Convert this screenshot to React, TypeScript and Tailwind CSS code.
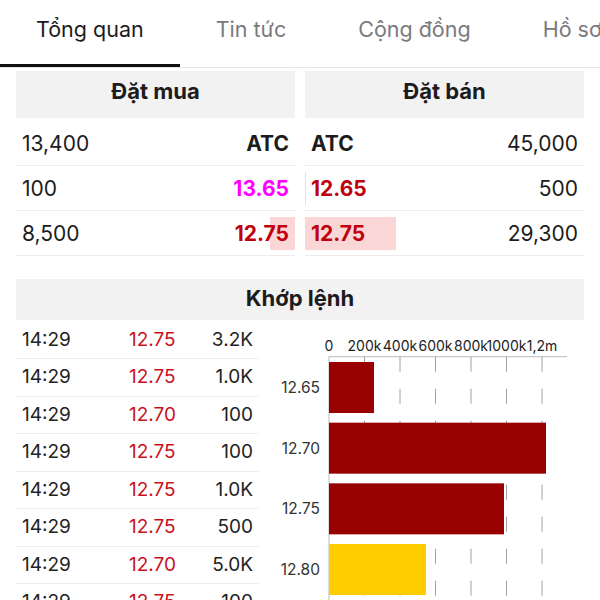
import React from "react";

const tabs = ["Tổng quan", "Tin tức", "Cộng đồng", "Hồ sơ"];

const trades = [
  ["14:29", "12.75", "3.2K"],
  ["14:29", "12.75", "1.0K"],
  ["14:29", "12.70", "100"],
  ["14:29", "12.75", "100"],
  ["14:29", "12.75", "1.0K"],
  ["14:29", "12.75", "500"],
  ["14:29", "12.70", "5.0K"],
  ["14:29", "12.75", "100"],
];

// volume chart: x0 = 70, 35.5px per 200k
const ticks = ["0", "200k", "400k", "600k", "800k", "1000k", "1,2m"];
const bars = [
  { label: "12.65", w: 45, color: "#990000" },
  { label: "12.70", w: 217, color: "#990000" },
  { label: "12.75", w: 175, color: "#990000" },
  { label: "12.80", w: 97, color: "#ffcc00" },
];

const VolumeChart = () => {
  const x0 = 70;
  const axisY = 36.7;
  return (
    <svg width="325" height="280" style={{ fontFamily: "Inter, 'Liberation Sans', sans-serif" }}>
      {ticks.map((t, i) => (
        <text key={t} x={x0 + i * 35.5} y={30.5} fontSize="14" fill="#222" textAnchor="middle">
          {t}
        </text>
      ))}
      <line x1={x0} y1={axisY} x2={308} y2={axisY} stroke="#bbb" strokeWidth="1" />
      <line x1={x0} y1={axisY} x2={x0} y2={280} stroke="#bbb" strokeWidth="1" />
      {ticks.slice(1).map((t, i) => (
        <line
          key={t}
          x1={x0 + (i + 1) * 35.5}
          y1={axisY}
          x2={x0 + (i + 1) * 35.5}
          y2={280}
          stroke="#a0a0a0"
          strokeWidth="1"
          strokeDasharray="15 17"
        />
      ))}
      {bars.map((b, i) => {
        const y = 42 + i * 60.67;
        return (
          <g key={b.label}>
            <rect x={x0} y={y} width={b.w} height={51} fill={b.color} />
            <text x={61} y={y + 31} fontSize="15.5" fill="#333" textAnchor="end">
              {b.label}
            </text>
          </g>
        );
      })}
    </svg>
  );
};

export default function App() {
  return (
    <div
      className="w-[600px] h-[600px] overflow-hidden bg-white text-[#1c1c1e]"
      style={{ fontFamily: "Inter, 'Liberation Sans', sans-serif" }}
    >
      {/* tabs */}
      <div className="flex whitespace-nowrap border-b border-[#e6e6e6]">
        {tabs.map((t, i) => (
          <div
            key={t}
            className={
              i === 0
                ? "px-[36px] h-[67px] pb-[6px] flex items-center text-[21.5px] border-b-[3px] border-[#111] text-[#1c1c1e]"
                : "px-[36px] h-[67px] pb-[6px] flex items-center text-[21.5px] border-b-[3px] border-transparent text-[#7a7a7e]"
            }
          >
            {t}
          </div>
        ))}
      </div>

      {/* order book */}
      <div className="px-4 mt-[3px] grid grid-cols-2 gap-x-[10px]">
        <div>
          <div className="h-[47px] pb-[6px] bg-[#f2f2f2] flex items-center justify-center text-[22px] font-bold">
            Đặt mua
          </div>
          <div className="mt-[3px] text-[21px]">
            <div className="h-[45px] pt-[1px] border-b border-[#ededed] flex items-center justify-between px-[6px]">
              <span>13,400</span>
              <span className="font-bold">ATC</span>
            </div>
            <div className="h-[45px] pt-[1px] border-b border-[#ededed] flex items-center justify-between px-[6px]">
              <span>100</span>
              <span className="font-bold text-[#f0f]">13.65</span>
            </div>
            <div className="relative h-[45px] pt-[1px] border-b border-[#ededed] flex items-center justify-between px-[6px]">
              <div className="absolute right-0 top-[6px] bottom-[5px] w-[25px] bg-[#fbd6d6]" />
              <span className="relative">8,500</span>
              <span className="relative font-bold text-[#c0000c]">12.75</span>
            </div>
          </div>
        </div>
        <div>
          <div className="h-[47px] pb-[6px] bg-[#f2f2f2] flex items-center justify-center text-[22px] font-bold">
            Đặt bán
          </div>
          <div className="mt-[3px] text-[21px]">
            <div className="h-[45px] pt-[1px] border-b border-[#ededed] flex items-center justify-between px-[6px]">
              <span className="font-bold">ATC</span>
              <span>45,000</span>
            </div>
            <div className="relative h-[45px] pt-[1px] border-b border-[#ededed] flex items-center justify-between px-[6px]">
              <div className="absolute left-0 top-[6px] bottom-[5px] w-[1px] bg-[#fbd6d6]" />
              <span className="relative font-bold text-[#c0000c]">12.65</span>
              <span className="relative">500</span>
            </div>
            <div className="relative h-[45px] pt-[1px] border-b border-[#ededed] flex items-center justify-between px-[6px]">
              <div className="absolute left-0 top-[6px] bottom-[5px] w-[91px] bg-[#fbd6d6]" />
              <span className="relative font-bold text-[#c0000c]">12.75</span>
              <span className="relative">29,300</span>
            </div>
          </div>
        </div>
      </div>

      {/* matched orders */}
      <div className="px-4 mt-[23px]">
        <div className="h-[41px] pb-[2px] bg-[#f2f2f2] flex items-center justify-center text-[22px] font-bold">
          Khớp lệnh
        </div>
        <div className="flex">
          <div className="w-[243px] mt-[1.5px] text-[19px] text-[#222]">
            {trades.map((r, i) => (
              <div key={i} className="h-[37.5px] border-b border-[#ededed] flex items-center px-[6px]">
                <span className="w-[107px]">{r[0]}</span>
                <span className="w-[50px] text-[#c8101e]">{r[1]}</span>
                <span className="flex-1 text-right">{r[2]}</span>
              </div>
            ))}
          </div>
          <div className="flex-1">
            <VolumeChart />
          </div>
        </div>
      </div>
    </div>
  );
}
